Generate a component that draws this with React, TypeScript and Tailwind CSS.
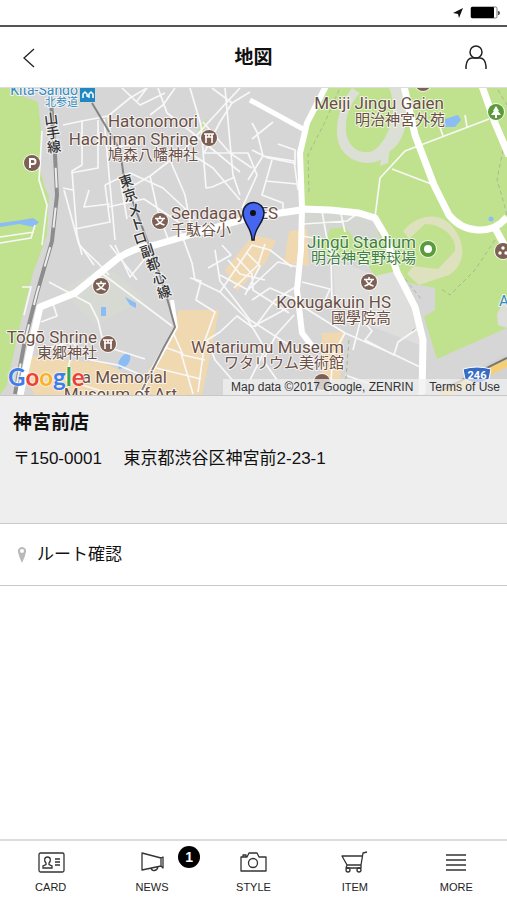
import type { ReactNode } from "react";

type LabelProps = {
  x: number;
  y: number;
  size?: number;
  fill?: string;
  anchor?: "start" | "middle" | "end";
  children: ReactNode;
};

const MAP_FONT = "Roboto, 'Noto Sans CJK JP', sans-serif";

function MapLabel({ x, y, size = 17, fill = "#6b4f45", anchor = "end", children }: LabelProps) {
  return (
    <text
      x={x}
      y={y}
      fontSize={size}
      fontFamily={MAP_FONT}
      fill={fill}
      textAnchor={anchor}
      stroke="#ffffff"
      strokeOpacity={0.75}
      strokeWidth={2}
      strokeLinejoin="round"
      paintOrder="stroke"
    >
      {children}
    </text>
  );
}

const subwayName: [string, number, number][] = [
  ["東", 126, 181],
  ["京", 130, 195],
  ["メ", 134, 210],
  ["ト", 137, 224],
  ["ロ", 140, 238],
  ["副", 147, 251],
  ["都", 153, 264],
  ["心", 159, 278],
  ["線", 164, 292],
];

const railName: [string, number, number][] = [
  ["山", 51, 119],
  ["手", 53, 133],
  ["線", 54, 147],
];

function LineName({ glyphs, angle }: { glyphs: [string, number, number][]; angle: number }) {
  return (
    <g
      fontFamily="'Noto Sans CJK JP', sans-serif"
      fontSize="14"
      fontWeight="500"
      fill="#333"
      textAnchor="middle"
      stroke="#fff"
      strokeOpacity="0.7"
      strokeWidth="2"
      paintOrder="stroke"
    >
      {glyphs.map(([glyph, x, y]) => (
        <text key={`${glyph}${y}`} transform={`translate(${x} ${y}) rotate(${angle})`} y="5">
          {glyph}
        </text>
      ))}
    </g>
  );
}

function Poi({ x, y, glyph, color = "#7d5f54" }: { x: number; y: number; glyph: "school" | "shrine" | "parking" | "dots" | "tree" | "ring" | "none"; color?: string }) {
  return (
    <g transform={`translate(${x} ${y})`}>
      <circle r="9" fill="#fff" opacity="0.8" />
      <circle r="8" fill={color} />
      {glyph === "school" && (
        <path d="M0-5v2M-5-2.500h10M-3-2C-2 1 1 3 4.500 4M3-2C2 1-1 3-4.500 4" fill="none" stroke="#fff" strokeWidth="1.500" />
      )}
      {glyph === "shrine" && <path d="M-5-4H5M-4-1H4M-3-4V5M3-4V5M0-4v3" fill="none" stroke="#fff" strokeWidth="1.600" />}
      {glyph === "parking" && <path d="M-2 5V-4H1a2.500 2.500 0 0 1 0 5H-2" fill="none" stroke="#fff" strokeWidth="2" />}
      {glyph === "dots" && (
        <g fill="#fff">
          <circle cy="-3" r="1.700" />
          <circle cx="-3" cy="2" r="1.700" />
          <circle cx="3" cy="2" r="1.700" />
        </g>
      )}
      {glyph === "tree" && <path d="M0-6 3-1H2L5 3H1V6H-1V3H-5L-2-1H-3Z" fill="#fff" />}
      {glyph === "ring" && <circle r="4" fill="#fff" />}
    </g>
  );
}

function StreetMap() {
  return (
    <svg viewBox="0 88 507 307" preserveAspectRatio="xMidYMid slice" className="block h-full w-full" role="img" aria-label="神宮前店の地図">
      <rect x="0" y="88" width="507" height="307" fill="#d6d6d6" />

      {/* School and shrine grounds */}
      <path d="M60 290 100 268 118 274 145 300 95 325 75 305Z" fill="#d7d9d3" />
      <path d="M333 260 370 273 395 270 412 300 420 345 360 322 335 300Z" fill="#dedfdc" />

      {/* Parks */}
      <path d="M0 88H14L22 96 38 102 41 130 40 168 44 185 49 197 47 235 33 273 20 325 7 385 0 395Z" fill="#c0e28f" />
      <path d="M324 88H507V328L437 359 424 317 435 310V288L409 283 397 271 375 276 366 262 312 243 334 228 360 226 385 234 373 218 357 212 302 209 299 152 305 128Z" fill="#c0e28f" />
      <path d="M302 211 358 215 373 225 382 240H302Z" fill="#d4d6d1" />
      <path d="M330 229 345 227 355 240 375 243 380 262 320 255Z" fill="#c0e28f" />
      <path d="M197 131 207 118 204 130Z" fill="#c0e28f" />
      <path d="M497 314 507 296V328L498 325Z" fill="#dddedb" />

      {/* Sports grounds */}
      <path d="M352 88C338 105 332 135 342 150 353 166 380 168 390 151 405 142 410 118 405 88H389C398 108 391 139 373 151 359 156 345 145 346 127 346 111 353 101 360 93Z" fill="#dcdfd5" />
      <path d="M382 154 390 147 388 163 380 166Z" fill="#dcdfd5" />
      <path d="M403 231C417 215 437 211 451 225 467 243 466 264 449 275L419 285 407 274 413 266 438 269 455 251C457 238 443 224 425 224L409 239Z" fill="#dde1bd" />

      {/* Shopping areas */}
      <path d="M253 235 276 240 266 262 237 291 225 270Z" fill="#f0d8b0" />
      <path d="M289 231 307 229 309 266 284 263Z" fill="#f0d8b0" />
      <path d="M179 310 219 310 213 342 202 395H145L148 370 164 350Z" fill="#f0d8b0" />
      <path d="M29 355 65 360 104 363 148 385 139 395H35L26 380Z" fill="#f0d8b0" />
      <path d="M322 333 344 332 340 385 322 378Z" fill="#f0d8b0" />

      {/* Water */}
      <g fill="#8bbcf4">
        <path d="M0 223 22 220 33 218 39 222 34 227 19 224 0 227Z" />
        <path d="M125 297 136 303 136 308 130 305Z" />
        <path d="M101 307h5v9h-5Z" />
        <path d="M118 365c1-8 8-13 12-11 2 8-4 14-11 15Z" />
        <path d="M445 119 458 115 461 120 455 127 444 127Z" />
        <circle cx="491" cy="219" r="2.500" />
      </g>

      {/* Narrow streets */}
      <g fill="none" stroke="#f8f8f8" strokeWidth="1.700" strokeLinejoin="round">
        <path d="M63 125 82 121 108 116 130 98 147 88M82 121V165L72 171 77 235 82 255M98 120 98 168 71 173M63 188 73 190M104 119 110 185 115 240M108 116 112 148 140 143" />
        <path d="M122 88 140 105 165 93M147 88 137 101M158 88 167 113 189 130 240 172M175 88 163 105 150 115M190 88 201 125 206 188 212 187 235 177M240 88 205 126 185 149 150 176 133 186" />
        <path d="M225 88 233 175 240 195M212 88 232 103 250 92M232 103 220 122 204 153M203 122 230 153 252 168M185 150 213 168 240 200M170 160 185 195 191 228" />
        <path d="M105 185 130 173 163 188 195 218M105 185 110 222 75 229M108 207 144 199 183 225M120 178 127 219M150 176 157 208 168 239M89 190 84 207 110 204M64 190 79 245 98 263 109 275" />
        <path d="M204 153 248 153 257 175 242 208M248 180 263 156 257 132 252 123M252 139 273 122M252 150 268 158 294 163M263 156 294 161 298 190M278 144 295 150 295 165M272 160 262 195 283 203V213M266 181 297 184" />
        <path d="M180 230 192 263 195 280 220 292 248 320 263 345M110 245 137 280M80 245 94 265M100 272 172 326M49 282 90 304 98 320M41 322 57 316 53 304M115 245 130 277 148 255M98 320 104 346 145 359" />
        <path d="M190 278 201 281 196 300 215 312 205 340 198 392M215 250 220 281 235 300 250 320 300 352M208 268 231 255 222 245M220 292 252 245 270 250 292 267" />
        <path d="M228 260 240 274 265 280M220 275 248 290 278 262 302 268M237 258 252 274 253 290 289 313M246 252 260 266 245 295M265 244 258 265 234 288M252 300 270 288 298 300M255 327 275 300 297 286" />
        <path d="M207 340 220 332 237 316 252 327 299 302M172 330 183 355 205 360M164 347 181 353 193 394M156 368 201 379M38 350 72 342 90 360 118 365 148 378M70 360 66 380 105 392" />
        <path d="M322 211 326 234 331 253 332 300M304 224 347 221 357 214M341 214 345 232M302 236 325 240M302 282 330 289 325 300M302 306 345 333 395 355 420 367M345 333 333 355 330 394M358 315 372 331 365 340 394 355 398 342 417 329M345 375 385 389" />
        <path d="M375 217 380 178 405 151 489 119M392 169 434 185M443 136 439 124 437 118M467 127 465 115M0 237 34 232M0 243 31 238 35 225" />
        <path d="M22 287H31L24 315M42 131 39 180 47 205 42 245" />
        <path d="M207 340 215 360 235 383M265 350 250 380 240 394M294 315 276 335 263 360 277 380M360 322 353 350" />
      </g>

      {/* Footpaths */}
      <g fill="none" stroke="#a6ba92" strokeWidth="1" strokeDasharray="4 3">
        <path d="M339 90 326 120 308 155 309 195" />
        <path d="M498 90 507 105M503 150 497 180 503 200 507 215" />
        <path d="M495 240 475 270 450 295 440 288M405 279 422 300M352 327 M412 331 420 325M349 340 345 390" />
      </g>

      {/* Main roads */}
      <g fill="none" stroke="#fff" strokeLinejoin="round">
        <path strokeWidth="6" d="M326 86 307 123 300 153 302 208 301 250 297 290 302 333 315 350" />
        <path strokeWidth="7" d="M404 86 415 135 434 185 449 215Q460 229 478 230T507 217" />
        <path strokeWidth="7" d="M482 86 495 123 509 156M495 228 507 250" />
        <path strokeWidth="7" d="M301 209 330 210 359 213 375 218 385 235 397 272 415 307 423 340 422 395" />
        <path strokeWidth="7" d="M20 395 30 350 40 307 75 293 117 259Q134 247 155 245L217 227 252 217 301 210" />
        <path strokeWidth="5" d="M250 100 303 129" />
        <path strokeWidth="4" d="M172 300 176 327 148 378 140 395" />
      </g>

      {/* Railways */}
      <g fill="none">
        <path d="M50 88 55 155 57 195 52 241 37 293 25 340 15 394" stroke="#8d8d8d" strokeWidth="4" />
        <path d="M50 88 55 155 57 195 52 241 37 293 25 340 15 394" stroke="#eeeeee" strokeWidth="2" strokeDasharray="20 20" />
        <path d="M92 103 120 150 124 178 160 275 169 305 175 327 164 347 142 390" stroke="#858585" strokeWidth="2" />
      </g>

      {/* Route 246 */}
      <path d="M422 395 507 354V395Z" fill="#d2d2d2" />
      <path d="M440 395 507 362" stroke="#f5cf76" strokeWidth="9" />
      <path d="M440 391 507 358" stroke="#777" strokeWidth="2" />
      <path d="M463 369Q477 365 491 369L489 379Q477 387 465 379Z" fill="#386cc4" stroke="#fff" />
      <text x="477" y="379" fill="#fff" textAnchor="middle" fontFamily={MAP_FONT} fontSize="11" fontWeight="700">
        246
      </text>

      <LineName glyphs={railName} angle={-7} />
      <LineName glyphs={subwayName} angle={-18} />

      <MapLabel x={78} y={95} size={14} fill="#368bbf">Kita-Sandō</MapLabel>
      <MapLabel x={78} y={106} size={11} fill="#368bbf">北参道</MapLabel>
      <rect x="80" y="88" width="15" height="14" fill="#1f88c0" />
      <path d="M83 98v-4l2-2 2 2v2l2 1V94l2-2 2 2v4" stroke="#fff" strokeWidth="1.500" fill="none" />

      <MapLabel x={198} y={127}>Hatonomori</MapLabel>
      <MapLabel x={198} y={145}>Hachiman Shrine</MapLabel>
      <MapLabel x={198} y={160} size={15}>鳩森八幡神社</MapLabel>
      <MapLabel x={171} y={219} anchor="start">Sendagaya ES</MapLabel>
      <MapLabel x={171} y={235} size={15} anchor="start">千駄谷小</MapLabel>
      <MapLabel x={444} y={109}>Meiji Jingu Gaien</MapLabel>
      <MapLabel x={445} y={125} size={15}>明治神宮外苑</MapLabel>
      <MapLabel x={416} y={248} fill="#3f8042">Jingū Stadium</MapLabel>
      <MapLabel x={416} y={263} size={15} fill="#3f8042">明治神宮野球場</MapLabel>
      <MapLabel x={391} y={308}>Kokugakuin HS</MapLabel>
      <MapLabel x={391} y={323} size={15}>國學院高</MapLabel>
      <MapLabel x={97} y={343}>Tōgō Shrine</MapLabel>
      <MapLabel x={97} y={358} size={15}>東郷神社</MapLabel>
      <MapLabel x={344} y={353}>Watariumu Museum</MapLabel>
      <MapLabel x={344} y={368} size={15}>ワタリウム美術館</MapLabel>
      <MapLabel x={167} y={383}>a Memorial</MapLabel>
      <MapLabel x={177} y={400}>Museum of Art</MapLabel>
      <MapLabel x={499} y={306} size={15} fill="#368bbf" anchor="start">A</MapLabel>

      <Poi x={209} y={138} glyph="shrine" />
      <Poi x={32} y={163} glyph="parking" />
      <Poi x={160} y={221} glyph="school" />
      <Poi x={101} y={286} glyph="school" />
      <Poi x={369} y={282} glyph="school" />
      <Poi x={108} y={344} glyph="shrine" />
      <Poi x={503} y={251} glyph="dots" />
      <Poi x={423} y={83} glyph="none" />
      <Poi x={322} y={382} glyph="none" />
      <Poi x={496} y={112} glyph="tree" color="#5c9b3c" />
      <Poi x={428} y={249} glyph="ring" color="#5c9b3c" />

      <path d="M252 240C252 228 243 223 243 213a10.500 10.500 0 0 1 21 0C264 223 254 228 254 240Z" fill="#4766f0" stroke="#111a35" strokeWidth="1.500" />
      <circle cx="253" cy="213" r="3" fill="#111" />
    </svg>
  );
}

function CardIcon() {
  return (
    <svg viewBox="0 0 28 24" className="h-6 w-7" fill="none" stroke="#333" strokeWidth="1.300" aria-hidden="true">
      <rect x="2" y="3" width="25" height="19" rx="1.500" />
      <path d="M6 18v-2l3-1.500v-1.500c-2-2-2-6 1.500-6s3.500 4 1.500 6v1.500l3 1.500v2ZM18 9h5M18 12h5M18 15h5" />
    </svg>
  );
}

function NewsIcon() {
  return (
    <svg viewBox="0 0 28 24" className="h-6 w-7" fill="none" stroke="#333" strokeWidth="1.300" strokeLinejoin="round" aria-hidden="true">
      <path d="M4 3v17l19-4V8ZM23 8l2-1v11l-2-2M13 18c1 4 6 3 7-1" />
    </svg>
  );
}

function StyleIcon() {
  return (
    <svg viewBox="0 0 28 24" className="h-6 w-7" fill="none" stroke="#333" strokeWidth="1.300" strokeLinejoin="round" aria-hidden="true">
      <path d="M2 7h6l2-4h8l2 4h7v14H2ZM4 7V5h3v2" />
      <circle cx="14" cy="13" r="4.500" />
    </svg>
  );
}

function ItemIcon() {
  return (
    <svg viewBox="0 0 28 24" className="h-6 w-7" fill="none" stroke="#333" strokeWidth="1.300" strokeLinejoin="round" aria-hidden="true">
      <path d="M26 2 22 3 20 15H6L1 6H21M6 15l-1 3h15v-3" />
      <circle cx="7" cy="20" r="2" />
      <circle cx="18" cy="20" r="2" />
    </svg>
  );
}

function MoreIcon() {
  return (
    <svg viewBox="0 0 28 24" className="h-6 w-7" fill="none" stroke="#333" strokeWidth="1.500" aria-hidden="true">
      <path d="M4 5h20M4 10h20M4 15h20M4 20h20" />
    </svg>
  );
}

const tabs = [
  { label: "CARD", icon: <CardIcon /> },
  { label: "NEWS", icon: <NewsIcon />, badge: 1 },
  { label: "STYLE", icon: <StyleIcon /> },
  { label: "ITEM", icon: <ItemIcon /> },
  { label: "MORE", icon: <MoreIcon /> },
];

export default function App() {
  return (
    <div className="flex min-h-screen flex-col bg-white font-['Liberation_Sans','Noto_Sans_CJK_JP',sans-serif] text-[#111]">
      <div className="flex h-[27px] items-center justify-end gap-1.5 border-b-2 border-[#555] pr-1.5">
        <svg viewBox="0 0 12 12" className="h-3 w-3" aria-hidden="true">
          <path d="M11 1 1 6l5 1 1 4Z" fill="#111" />
        </svg>
        <svg viewBox="0 0 31 13" className="h-[13px] w-[31px]" aria-hidden="true">
          <rect x="1" y="1" width="26" height="11" rx="1.500" fill="#fff" stroke="#777" />
          <rect x="1" y="1" width="23" height="11" rx="1" fill="#000" />
          <path d="M28 5h1q2 2 0 4h-1Z" fill="#555" />
        </svg>
      </div>

      <header className="flex h-[61px] items-center justify-between border-b border-[#ddd] px-[15px] pt-0.5">
        <button type="button" aria-label="戻る" className="flex h-8 w-8 items-center justify-center pr-1">
          <svg viewBox="0 0 12 20" className="h-5 w-3" fill="none" stroke="#222" strokeWidth="1.300" aria-hidden="true">
            <path d="M11 1 1 10l10 9" />
          </svg>
        </button>
        <h1 className="text-[19px] font-bold leading-7">地図</h1>
        <button type="button" aria-label="アカウント" className="flex h-8 w-8 items-center justify-center">
          <svg viewBox="0 0 24 26" className="h-[26px] w-6" fill="none" stroke="#222" strokeWidth="1.500" aria-hidden="true">
            <circle cx="12" cy="7" r="6" />
            <path d="M2 24v-3q1-8 6-8h8q5 0 6 8v3" />
          </svg>
        </button>
      </header>

      <main>
        <section className="relative h-[307px] overflow-hidden">
          <StreetMap />
          <div className="absolute bottom-0 left-2 flex h-9 items-center font-[Lato,sans-serif] text-2xl font-bold [text-shadow:0_0_2px_#fff,0_0_2px_#fff]">
            <span className="text-[#3f7ee8]">G</span>
            <span className="text-[#e94335]">o</span>
            <span className="text-[#f5b52a]">o</span>
            <span className="text-[#3f7ee8]">g</span>
            <span className="text-[#34a853]">l</span>
            <span className="text-[#e94335]">e</span>
          </div>
          <div className="absolute right-0 bottom-0 flex h-4 items-center gap-4 bg-[#f0f0f0]/75 pr-[7px] pl-2 text-xs text-[#333]">
            <span>Map data ©2017 Google, ZENRIN</span>
            <a href="#terms">Terms of Use</a>
          </div>
        </section>

        <section className="h-[129px] border-y border-[#c8c8c8] bg-[#eee] px-[13px] pt-[13px]">
          <h2 className="text-[19px] font-bold leading-7">神宮前店</h2>
          <p className="mt-2 text-[17px] leading-7">〒150-0001　 東京都渋谷区神宮前2-23-1</p>
        </section>

        <a href="#route" className="flex h-[62px] items-center gap-[9px] border-b border-[#c8c8c8] px-4 text-[17px]">
          <svg viewBox="0 0 12 18" className="h-[18px] w-3" aria-hidden="true">
            <path d="M6 1a4 4 0 0 1 4 5q-1 5-4 11Q3 11 2 6a4 4 0 0 1 4-5Z" fill="#b9b9b9" />
            <circle cx="6" cy="5" r="2" fill="#fff" />
          </svg>
          <span>ルート確認</span>
        </a>
      </main>

      <nav className="mt-auto grid h-[61px] grid-cols-5 border-t-2 border-[#ddd]">
        {tabs.map((tab) => (
          <button key={tab.label} type="button" className="flex flex-col items-center gap-[5px] pt-[9px] text-[11px] leading-4 text-[#222]">
            <span className="relative">
              {tab.icon}
              {tab.badge && (
                <span className="absolute -top-1 left-10 flex h-[22px] w-[22px] items-center justify-center rounded-full bg-black text-sm font-bold text-white">
                  {tab.badge}
                </span>
              )}
            </span>
            <span>{tab.label}</span>
          </button>
        ))}
      </nav>
    </div>
  );
}
